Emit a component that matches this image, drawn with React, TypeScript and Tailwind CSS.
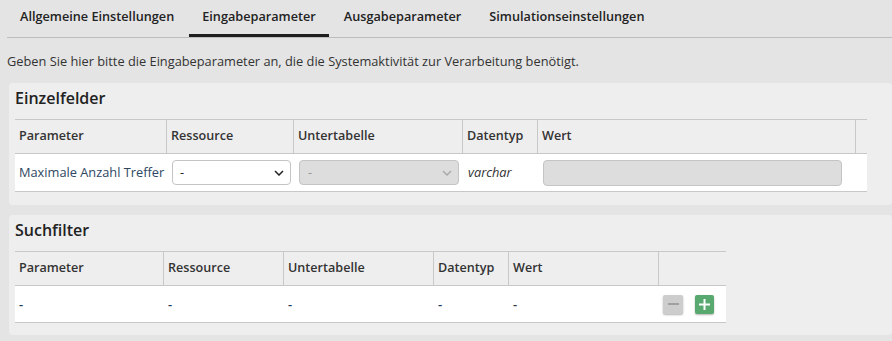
import React from "react";

const tabs = ["Allgemeine Einstellungen", "Eingabeparameter", "Ausgabeparameter", "Simulationseinstellungen"];

function Chevron({ className }: { className: string }) {
    return (
        <svg width="10" height="6" viewBox="0 0 10 6" className={className}>
            <path d="M1 1 L5 5 L9 1" fill="none" stroke="currentColor" strokeWidth="1.5" />
        </svg>
    );
}

function HeadCell({ w, children, last }: { w: string; children?: React.ReactNode; last?: boolean }) {
    return (
        <div className={`${w} flex items-center px-[4px] font-semibold text-[12.6px] text-[#333] ${last ? "" : "border-r border-[#c8c8c8]"}`}>
            {children}
        </div>
    );
}

export default function App() {
    return (
        <div className="min-h-[341px] w-[892px] bg-[#e4e4e4] overflow-hidden" style={{ fontFamily: "'Open Sans', sans-serif" }}>
            <div className="ml-[7px] flex border-b border-[#bdbdbd]">
                {tabs.map((t, i) => (
                    <div
                        key={t}
                        className={`mr-[2px] px-[13px] pt-[7px] pb-[8px] text-[12.7px] leading-[19px] font-semibold text-[#222] border-b-[3px] ${i === 1 ? "border-[#1f1f1f]" : "border-transparent"}`}
                    >
                        {t}
                    </div>
                ))}
            </div>

            <p className="ml-[7px] mt-[14px] text-[12.8px] text-[#333]">
                Geben Sie hier bitte die Eingabeparameter an, die die Systemaktivität zur Verarbeitung benötigt.
            </p>

            {/* Einzelfelder */}
            <div className="ml-[9px] mt-[12px] rounded-[4px] bg-[#eeeeee] pl-[6px] pt-[4px] pb-[13px]">
                <h2 className="text-[16px] font-semibold text-[#222] leading-[22px]">Einzelfelder</h2>
                <div className="mt-[10px] w-[852px]">
                    <div className="flex h-[35px] border-y border-[#c8c8c8]">
                        <HeadCell w="w-[152px]">Parameter</HeadCell>
                        <HeadCell w="w-[127px]">Ressource</HeadCell>
                        <HeadCell w="w-[169px]">Untertabelle</HeadCell>
                        <HeadCell w="w-[75px]">Datentyp</HeadCell>
                        <HeadCell w="w-[318px]">Wert</HeadCell>
                        <HeadCell w="w-[11px]" last />
                    </div>
                    <div className="flex h-[38px] items-center bg-white border-b border-[#c8c8c8] text-[12.8px]">
                        <div className="w-[152px] pl-[4px] text-[#2d4762] whitespace-nowrap">Maximale Anzahl Treffer</div>
                        <div className="w-[127px] pl-[5px]">
                            <div className="flex h-[25px] w-[119px] items-center justify-between rounded-[4px] border border-[#c4c4c4] bg-white pl-[7px] pr-[6px] text-[#222]">
                                <span>-</span>
                                <Chevron className="text-[#222]" />
                            </div>
                        </div>
                        <div className="w-[169px] pl-[5px]">
                            <div className="flex h-[25px] w-[160px] items-center justify-between rounded-[4px] border border-[#c4c4c4] bg-[#dddddd] pl-[8px] pr-[6px] text-[#999]">
                                <span>-</span>
                                <Chevron className="text-[#aaa]" />
                            </div>
                        </div>
                        <div className="w-[75px] pl-[5px] italic text-[#333]">varchar</div>
                        <div className="w-[318px] pl-[5px]">
                            <div className="h-[26px] w-[299px] rounded-[4px] border border-[#c4c4c4] bg-[#dddddd]" />
                        </div>
                    </div>
                </div>
            </div>

            {/* Suchfilter */}
            <div className="ml-[9px] mt-[10px] rounded-[4px] bg-[#eeeeee] pl-[6px] pt-[4px] pb-[12px]">
                <h2 className="text-[16px] font-semibold text-[#222] leading-[22px]">Suchfilter</h2>
                <div className="mt-[10px] w-[711px]">
                    <div className="flex h-[35px] border-y border-[#c8c8c8]">
                        <HeadCell w="w-[149px]">Parameter</HeadCell>
                        <HeadCell w="w-[120px]">Ressource</HeadCell>
                        <HeadCell w="w-[150px]">Untertabelle</HeadCell>
                        <HeadCell w="w-[75px]">Datentyp</HeadCell>
                        <HeadCell w="w-[150px]">Wert</HeadCell>
                        <HeadCell w="w-[67px]" last />
                    </div>
                    <div className="flex h-[37px] items-center bg-white border-b border-[#c8c8c8] text-[12.8px] font-semibold text-[#1d3d5e]">
                        <div className="w-[149px] pl-[4px]">-</div>
                        <div className="w-[120px] pl-[4px]">-</div>
                        <div className="w-[150px] pl-[4px]">-</div>
                        <div className="w-[75px] pl-[4px]">-</div>
                        <div className="w-[150px] pl-[4px] text-[#333]">-</div>
                        <div className="flex w-[67px] items-center gap-[12px] pl-[4px]">
                            <div className="flex h-[19px] w-[20px] items-center justify-center rounded-[2px] bg-[#cdcdcd] shadow-[0_1px_2px_rgba(0,0,0,0.3)]">
                                <div className="h-[1.5px] w-[11px] bg-[#a0a0a0]" />
                            </div>
                            <div className="flex h-[19px] w-[19px] items-center justify-center rounded-[2px] bg-[#57a96f] shadow-[0_1px_2px_rgba(0,0,0,0.3)]">
                                <svg width="11" height="11" viewBox="0 0 11 11">
                                    <path d="M5.5 0 V11 M0 5.5 H11" stroke="#fff" strokeWidth="2" />
                                </svg>
                            </div>
                        </div>
                    </div>
                </div>
            </div>
        </div>
    );
}
